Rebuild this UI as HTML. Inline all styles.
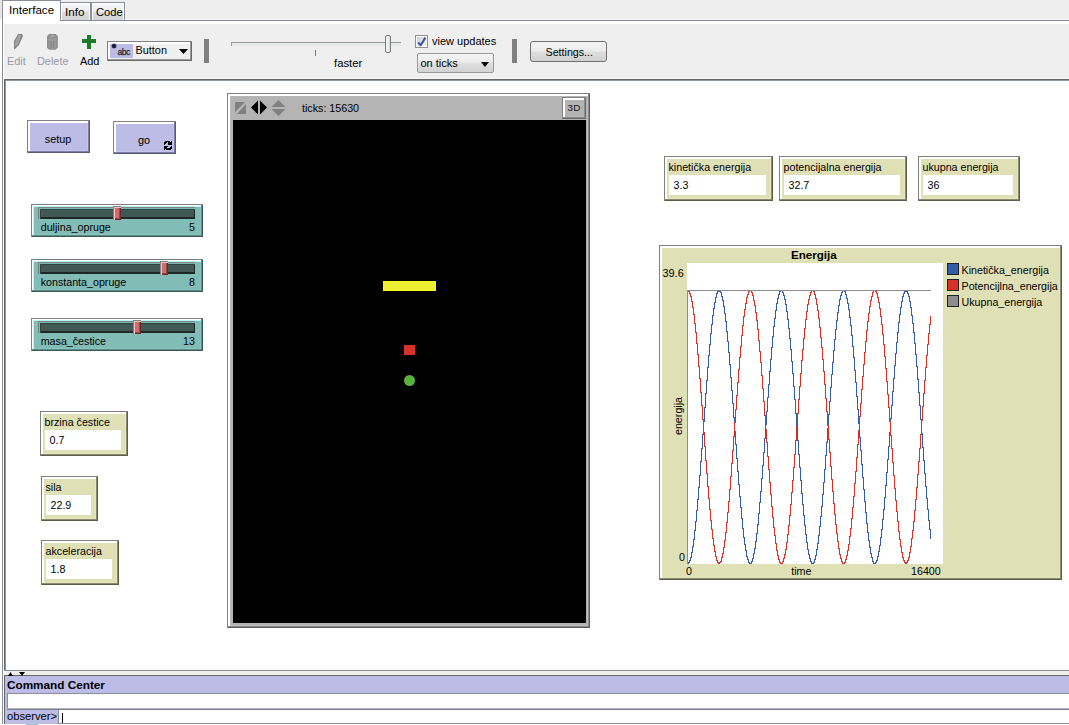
<!DOCTYPE html>
<html><head><meta charset="utf-8"><style>
html,body{margin:0;padding:0;width:1069px;height:725px;overflow:hidden;background:#fff;font-family:"Liberation Sans", sans-serif;}
</style></head><body>
<div style="position:absolute;left:0px;top:0px;width:1069px;height:20px;background:#eeeeee"></div>
<div style="position:absolute;left:0px;top:19px;width:1069px;height:1px;background:#f4f4f4"></div>
<div style="position:absolute;left:0px;top:0px;width:2px;height:19px;background:#e6e6e6"></div>
<div style="position:absolute;left:0px;top:20px;width:1069px;height:1px;background:#898d96"></div>
<div style="position:absolute;left:60px;top:2px;width:31px;height:18px;background:linear-gradient(#f8f8f8,#ececec 50%,#dadada 55%,#d6d6d6);border:1px solid #8a8e98;border-bottom:none;box-sizing:border-box;box-shadow:inset 1px 1px 0 #fff,inset -1px 0 0 #fff"></div>
<div style="position:absolute;left:91px;top:2px;width:34px;height:18px;background:linear-gradient(#f8f8f8,#ececec 50%,#dadada 55%,#d6d6d6);border:1px solid #8a8e98;border-bottom:none;box-sizing:border-box;box-shadow:inset 1px 1px 0 #fff,inset -1px 0 0 #fff"></div>
<div style="position:absolute;left:2px;top:0px;width:59px;height:21px;background:#fff;border:1px solid #8a8e98;border-bottom:none;box-sizing:border-box"></div>
<div style="position:absolute;left:9px;top:2.98px;line-height:14px;font-size:11.6px;font-weight:400;color:#000;white-space:nowrap;">Interface</div>
<div style="position:absolute;left:65px;top:4.98px;line-height:14px;font-size:11.6px;font-weight:400;color:#000;white-space:nowrap;">Info</div>
<div style="position:absolute;left:96px;top:5.12px;line-height:14px;font-size:11.2px;font-weight:400;color:#000;white-space:nowrap;">Code</div>
<div style="position:absolute;left:0px;top:19px;width:2px;height:706px;background:#fff"></div>
<div style="position:absolute;left:2px;top:20px;width:1px;height:705px;background:#8a8e98"></div>
<div style="position:absolute;left:3px;top:21px;width:1066px;height:3px;background:#fff"></div>
<div style="position:absolute;left:4px;top:24px;width:1065px;height:54px;background:#efefef"></div>
<div style="position:absolute;left:4px;top:78px;width:1065px;height:1px;background:#f8f8f8"></div>
<svg style="position:absolute;left:13px;top:33px" width="12" height="18" viewBox="0 0 12 18"><path d="M5 1 H9 L10 3 L6 12 L2 16 H1 V8 Z" fill="#858585"/><path d="M5.6 2 H8.6 L5.2 11 L2.2 13.5 L2 9 Z" fill="#a2a2a2"/></svg>
<div style="position:absolute;left:7px;top:54.22px;line-height:14px;font-size:10.9px;font-weight:400;color:#9a9aa8;white-space:nowrap;">Edit</div>
<svg style="position:absolute;left:46px;top:33px" width="13" height="18" viewBox="0 0 13 18"><path d="M3 1 H9.7 L11.8 3.2 V14.5 L9.7 16.8 H3 L1 14.5 V3.2 Z" fill="#8c8c8c"/><path d="M2.5 4 Q6.4 8 10.5 4 V14 L9.2 15.5 H3.5 L2.5 14 Z" fill="#9a9a9a"/><path d="M5 8v7M7.8 8v7" stroke="#808080" stroke-width="0.9"/><ellipse cx="6.4" cy="3.3" rx="2.5" ry="1.3" fill="#a8a8a8"/></svg>
<div style="position:absolute;left:37px;top:54.22px;line-height:14px;font-size:10.9px;font-weight:400;color:#9a9aa8;white-space:nowrap;">Delete</div>
<div style="position:absolute;left:82px;top:39px;width:14px;height:4px;background:#1c7a2a"></div>
<div style="position:absolute;left:87px;top:35px;width:4px;height:14px;background:#1c7a2a"></div>
<div style="position:absolute;left:80px;top:54.22px;line-height:14px;font-size:10.9px;font-weight:400;color:#000;white-space:nowrap;">Add</div>
<div style="position:absolute;left:107px;top:41px;width:85px;height:20px;background:#efefef;box-shadow:inset 1px 1px 0 #808080, inset -1px -1px 0 #6a6a6a, inset -2px -2px 0 #9a9a9a, inset 2px 2px 0 #fff, inset 3px 3px 0 #fff"></div>
<div style="position:absolute;left:110px;top:44px;width:23px;height:14px;background:#bcbce6"></div>
<div style="position:absolute;left:112px;top:44px;width:4px;height:4px;background:#1a1a40;border-radius:2px;box-shadow:0 0 0 0.5px #555"></div>
<div style="position:absolute;left:117.5px;top:45.02px;line-height:14px;font-size:8.6px;font-weight:400;color:#2a2a2a;white-space:nowrap;letter-spacing:-0.5px;-webkit-text-stroke:0.25px #2a2a2a">abc</div>
<div style="position:absolute;left:135.5px;top:43.22px;line-height:14px;font-size:10.9px;font-weight:400;color:#000;white-space:nowrap;">Button</div>
<svg style="position:absolute;left:179px;top:49px" width="9" height="5"><path d="M0 0H9L4.5 5Z" fill="#000"/></svg>
<div style="position:absolute;left:204px;top:39px;width:5px;height:24px;background:#808080"></div>
<div style="position:absolute;left:512px;top:39px;width:5px;height:24px;background:#808080"></div>
<div style="position:absolute;left:231px;top:42px;width:170px;height:4px;background:#e6eae6;border-top:1px solid #9a9a9a;border-left:1px solid #9a9a9a;box-sizing:border-box"></div>
<div style="position:absolute;left:385px;top:35px;width:6px;height:18px;box-sizing:border-box;border:1px solid #7a7a7a;border-radius:2px;background:linear-gradient(90deg,#fafafa,#dedede)"></div>
<div style="position:absolute;left:315px;top:50px;width:1px;height:6px;background:#777"></div>
<div style="position:absolute;left:334px;top:56.08px;line-height:14px;font-size:11.3px;font-weight:400;color:#000;white-space:nowrap;">faster</div>
<div style="position:absolute;left:415px;top:35px;width:13px;height:13px;box-sizing:border-box;border:1px solid #8e8f8f;background:linear-gradient(135deg,#c4c8d0,#e8e8e8 60%,#f6f6f6);box-shadow:inset 0 0 0 1px #fff"></div>
<svg style="position:absolute;left:416px;top:36px" width="11" height="11"><path d="M2.2 6.3 L4.7 9.3 L9.4 1.6" stroke="#3c58a4" stroke-width="2.1" fill="none" stroke-linejoin="round"/></svg>
<div style="position:absolute;left:432px;top:34.19px;line-height:14px;font-size:11px;font-weight:400;color:#000;white-space:nowrap;">view updates</div>
<div style="position:absolute;left:417px;top:53px;width:77px;height:20px;box-sizing:border-box;border:1px solid #9a9a9a;border-radius:2px;background:linear-gradient(#f4f4f4 0%,#ececec 45%,#dedede 55%,#d2d2d2 100%)"></div>
<div style="position:absolute;left:420.5px;top:56.19px;line-height:14px;font-size:11px;font-weight:400;color:#000;white-space:nowrap;">on ticks</div>
<svg style="position:absolute;left:481px;top:62px" width="8" height="5"><path d="M0 0H8L4 5Z" fill="#000"/></svg>
<div style="position:absolute;left:530px;top:41px;width:77px;height:21px;box-sizing:border-box;border:1px solid #707070;border-radius:3px;background:linear-gradient(#f4f4f4 0%,#ececec 45%,#dedede 55%,#cfcfcf 100%)"></div>
<div style="position:absolute;left:545.5px;top:45.29px;line-height:14px;font-size:10.7px;font-weight:400;color:#000;white-space:nowrap;">Settings...</div>
<div style="position:absolute;left:4px;top:79px;width:1065px;height:1px;background:#646464"></div>
<div style="position:absolute;left:4px;top:80px;width:1065px;height:1px;background:#9096a0"></div>
<div style="position:absolute;left:4px;top:79px;width:1px;height:592px;background:#646464"></div>
<div style="position:absolute;left:5px;top:80px;width:1px;height:591px;background:#9096a0"></div>
<div style="position:absolute;left:6px;top:81px;width:1063px;height:589px;background:#fff"></div>
<div style="position:absolute;left:4px;top:670px;width:1065px;height:1px;background:#8a8e98"></div>
<div style="position:absolute;left:4px;top:671px;width:1065px;height:4px;background:#efefef"></div>
<div style="position:absolute;left:27px;top:120px;width:63px;height:33px;background:#bcbce6;box-shadow:inset 1px 1px 0 #808080, inset -1px -1px 0 #5a5a74, inset -2px -2px 0 #7e7ea4, inset 2px 2px 0 #fff, inset 3px 3px 0 #fff, inset -3px -3px 0 #c4c4ee"></div>
<div style="position:absolute;left:44.7px;top:132.22px;line-height:14px;font-size:10.9px;font-weight:400;color:#000;white-space:nowrap;">setup</div>
<div style="position:absolute;left:113px;top:121px;width:63px;height:33px;background:#bcbce6;box-shadow:inset 1px 1px 0 #808080, inset -1px -1px 0 #5a5a74, inset -2px -2px 0 #7e7ea4, inset 2px 2px 0 #fff, inset 3px 3px 0 #fff, inset -3px -3px 0 #c4c4ee"></div>
<div style="position:absolute;left:138px;top:133.22px;line-height:14px;font-size:10.9px;font-weight:400;color:#000;white-space:nowrap;">go</div>
<svg style="position:absolute;left:164px;top:141px" width="8" height="9" shape-rendering="crispEdges" fill="#000"><rect x="1" y="0" width="1" height="1"/><rect x="2" y="0" width="1" height="1"/><rect x="3" y="0" width="1" height="1"/><rect x="4" y="0" width="1" height="1"/><rect x="5" y="0" width="1" height="1"/><rect x="7" y="0" width="1" height="1"/><rect x="0" y="1" width="1" height="1"/><rect x="1" y="1" width="1" height="1"/><rect x="2" y="1" width="1" height="1"/><rect x="4" y="1" width="1" height="1"/><rect x="5" y="1" width="1" height="1"/><rect x="6" y="1" width="1" height="1"/><rect x="7" y="1" width="1" height="1"/><rect x="0" y="2" width="1" height="1"/><rect x="1" y="2" width="1" height="1"/><rect x="4" y="2" width="1" height="1"/><rect x="5" y="2" width="1" height="1"/><rect x="6" y="2" width="1" height="1"/><rect x="7" y="2" width="1" height="1"/><rect x="0" y="3" width="1" height="1"/><rect x="4" y="3" width="1" height="1"/><rect x="5" y="3" width="1" height="1"/><rect x="6" y="3" width="1" height="1"/><rect x="7" y="3" width="1" height="1"/><rect x="0" y="5" width="1" height="1"/><rect x="1" y="5" width="1" height="1"/><rect x="2" y="5" width="1" height="1"/><rect x="3" y="5" width="1" height="1"/><rect x="7" y="5" width="1" height="1"/><rect x="0" y="6" width="1" height="1"/><rect x="1" y="6" width="1" height="1"/><rect x="2" y="6" width="1" height="1"/><rect x="6" y="6" width="1" height="1"/><rect x="7" y="6" width="1" height="1"/><rect x="0" y="7" width="1" height="1"/><rect x="1" y="7" width="1" height="1"/><rect x="2" y="7" width="1" height="1"/><rect x="3" y="7" width="1" height="1"/><rect x="4" y="7" width="1" height="1"/><rect x="5" y="7" width="1" height="1"/><rect x="6" y="7" width="1" height="1"/><rect x="7" y="7" width="1" height="1"/><rect x="0" y="8" width="1" height="1"/><rect x="2" y="8" width="1" height="1"/><rect x="3" y="8" width="1" height="1"/><rect x="4" y="8" width="1" height="1"/><rect x="5" y="8" width="1" height="1"/><rect x="6" y="8" width="1" height="1"/></svg>
<div style="position:absolute;left:31px;top:204px;width:172px;height:33px;background:#82bcb7;box-shadow:inset 1px 1px 0 #808080, inset -1px -1px 0 #3c5a56, inset -2px -2px 0 #5e8a85, inset 2px 2px 0 #fff, inset 3px 3px 0 #b0f8f8, inset -3px -3px 0 #8ac4bf"></div>
<div style="position:absolute;left:38px;top:207px;width:157px;height:12px;background:#415955;box-shadow:inset 1px 1px 0 #808080, inset 2px 2px 0 #7cb8b2, inset 3px 3px 0 #2e4440, inset -1px -2px 0 #1c2826"></div>
<div style="position:absolute;left:113px;top:206px;width:8px;height:14px;background:linear-gradient(90deg,#d06a6a,#cc7070 60%,#b05858);box-shadow:inset 1px 1px 0 #808080, inset 2px 2px 0 #ffc0c0, inset -1px -1px 0 #6a2828, inset -2px -2px 0 #944848"></div>
<div style="position:absolute;left:40.7px;top:220.29px;line-height:14px;font-size:10.7px;font-weight:400;color:#000;white-space:nowrap;">duljina_opruge</div>
<div style="position:absolute;right:874px;top:220.29px;line-height:14px;font-size:10.7px;font-weight:400;color:#000;white-space:nowrap;">5</div>
<div style="position:absolute;left:31px;top:259px;width:172px;height:33px;background:#82bcb7;box-shadow:inset 1px 1px 0 #808080, inset -1px -1px 0 #3c5a56, inset -2px -2px 0 #5e8a85, inset 2px 2px 0 #fff, inset 3px 3px 0 #b0f8f8, inset -3px -3px 0 #8ac4bf"></div>
<div style="position:absolute;left:38px;top:262px;width:157px;height:12px;background:#415955;box-shadow:inset 1px 1px 0 #808080, inset 2px 2px 0 #7cb8b2, inset 3px 3px 0 #2e4440, inset -1px -2px 0 #1c2826"></div>
<div style="position:absolute;left:160px;top:261px;width:8px;height:14px;background:linear-gradient(90deg,#d06a6a,#cc7070 60%,#b05858);box-shadow:inset 1px 1px 0 #808080, inset 2px 2px 0 #ffc0c0, inset -1px -1px 0 #6a2828, inset -2px -2px 0 #944848"></div>
<div style="position:absolute;left:40.7px;top:275.29px;line-height:14px;font-size:10.7px;font-weight:400;color:#000;white-space:nowrap;">konstanta_opruge</div>
<div style="position:absolute;right:874px;top:275.29px;line-height:14px;font-size:10.7px;font-weight:400;color:#000;white-space:nowrap;">8</div>
<div style="position:absolute;left:31px;top:318px;width:172px;height:33px;background:#82bcb7;box-shadow:inset 1px 1px 0 #808080, inset -1px -1px 0 #3c5a56, inset -2px -2px 0 #5e8a85, inset 2px 2px 0 #fff, inset 3px 3px 0 #b0f8f8, inset -3px -3px 0 #8ac4bf"></div>
<div style="position:absolute;left:38px;top:321px;width:157px;height:12px;background:#415955;box-shadow:inset 1px 1px 0 #808080, inset 2px 2px 0 #7cb8b2, inset 3px 3px 0 #2e4440, inset -1px -2px 0 #1c2826"></div>
<div style="position:absolute;left:133px;top:320px;width:8px;height:14px;background:linear-gradient(90deg,#d06a6a,#cc7070 60%,#b05858);box-shadow:inset 1px 1px 0 #808080, inset 2px 2px 0 #ffc0c0, inset -1px -1px 0 #6a2828, inset -2px -2px 0 #944848"></div>
<div style="position:absolute;left:40.7px;top:334.29px;line-height:14px;font-size:10.7px;font-weight:400;color:#000;white-space:nowrap;">masa_čestice</div>
<div style="position:absolute;right:874px;top:334.29px;line-height:14px;font-size:10.7px;font-weight:400;color:#000;white-space:nowrap;">13</div>
<div style="position:absolute;left:40px;top:411px;width:88px;height:45px;background:#e0e0b6;box-shadow:inset 1px 1px 0 #808080, inset -1px -1px 0 #5e5e48, inset -2px -2px 0 #8a8a70, inset 2px 2px 0 #fff, inset 3px 3px 0 #fff, inset -3px -3px 0 #e6e6c0"></div>
<div style="position:absolute;left:44.5px;top:415.29px;line-height:14px;font-size:10.7px;font-weight:400;color:#000;white-space:nowrap;">brzina čestice</div>
<div style="position:absolute;left:45px;top:430px;width:76px;height:20px;background:#fff"></div>
<div style="position:absolute;left:49.5px;top:433.29px;line-height:14px;font-size:10.7px;font-weight:400;color:#000;white-space:nowrap;">0.7</div>
<div style="position:absolute;left:41px;top:476px;width:57px;height:45px;background:#e0e0b6;box-shadow:inset 1px 1px 0 #808080, inset -1px -1px 0 #5e5e48, inset -2px -2px 0 #8a8a70, inset 2px 2px 0 #fff, inset 3px 3px 0 #fff, inset -3px -3px 0 #e6e6c0"></div>
<div style="position:absolute;left:45.5px;top:480.29px;line-height:14px;font-size:10.7px;font-weight:400;color:#000;white-space:nowrap;">sila</div>
<div style="position:absolute;left:46px;top:495px;width:45px;height:20px;background:#fff"></div>
<div style="position:absolute;left:50.5px;top:498.29px;line-height:14px;font-size:10.7px;font-weight:400;color:#000;white-space:nowrap;">22.9</div>
<div style="position:absolute;left:41px;top:540px;width:78px;height:45px;background:#e0e0b6;box-shadow:inset 1px 1px 0 #808080, inset -1px -1px 0 #5e5e48, inset -2px -2px 0 #8a8a70, inset 2px 2px 0 #fff, inset 3px 3px 0 #fff, inset -3px -3px 0 #e6e6c0"></div>
<div style="position:absolute;left:45.5px;top:544.29px;line-height:14px;font-size:10.7px;font-weight:400;color:#000;white-space:nowrap;">akceleracija</div>
<div style="position:absolute;left:46px;top:559px;width:66px;height:20px;background:#fff"></div>
<div style="position:absolute;left:50.5px;top:562.29px;line-height:14px;font-size:10.7px;font-weight:400;color:#000;white-space:nowrap;">1.8</div>
<div style="position:absolute;left:664px;top:156px;width:109px;height:45px;background:#e0e0b6;box-shadow:inset 1px 1px 0 #808080, inset -1px -1px 0 #5e5e48, inset -2px -2px 0 #8a8a70, inset 2px 2px 0 #fff, inset 3px 3px 0 #fff, inset -3px -3px 0 #e6e6c0"></div>
<div style="position:absolute;left:668.5px;top:160.29px;line-height:14px;font-size:10.7px;font-weight:400;color:#000;white-space:nowrap;">kinetička energija</div>
<div style="position:absolute;left:669px;top:175px;width:97px;height:20px;background:#fff"></div>
<div style="position:absolute;left:673.5px;top:178.29px;line-height:14px;font-size:10.7px;font-weight:400;color:#000;white-space:nowrap;">3.3</div>
<div style="position:absolute;left:779px;top:156px;width:128px;height:45px;background:#e0e0b6;box-shadow:inset 1px 1px 0 #808080, inset -1px -1px 0 #5e5e48, inset -2px -2px 0 #8a8a70, inset 2px 2px 0 #fff, inset 3px 3px 0 #fff, inset -3px -3px 0 #e6e6c0"></div>
<div style="position:absolute;left:783.5px;top:160.29px;line-height:14px;font-size:10.7px;font-weight:400;color:#000;white-space:nowrap;">potencijalna energija</div>
<div style="position:absolute;left:784px;top:175px;width:116px;height:20px;background:#fff"></div>
<div style="position:absolute;left:788.5px;top:178.29px;line-height:14px;font-size:10.7px;font-weight:400;color:#000;white-space:nowrap;">32.7</div>
<div style="position:absolute;left:918px;top:156px;width:102px;height:45px;background:#e0e0b6;box-shadow:inset 1px 1px 0 #808080, inset -1px -1px 0 #5e5e48, inset -2px -2px 0 #8a8a70, inset 2px 2px 0 #fff, inset 3px 3px 0 #fff, inset -3px -3px 0 #e6e6c0"></div>
<div style="position:absolute;left:922.5px;top:160.29px;line-height:14px;font-size:10.7px;font-weight:400;color:#000;white-space:nowrap;">ukupna energija</div>
<div style="position:absolute;left:923px;top:175px;width:90px;height:20px;background:#fff"></div>
<div style="position:absolute;left:927.5px;top:178.29px;line-height:14px;font-size:10.7px;font-weight:400;color:#000;white-space:nowrap;">36</div>
<div style="position:absolute;left:227px;top:93px;width:363px;height:535px;background:#b4b4b4;box-shadow:inset 1px 1px 0 #808080, inset -1px -1px 0 #5a5a5a, inset -2px -2px 0 #8a8a8a, inset 2px 2px 0 #fff, inset 3px 3px 0 #fff, inset -3px -3px 0 #bcbcbc"></div>
<div style="position:absolute;left:233px;top:120px;width:353px;height:503px;background:#000"></div>
<svg style="position:absolute;left:235px;top:102px" width="12" height="13" viewBox="0 0 12 13"><path d="M0 0H10L0 10Z M2 12H11V2Z" fill="#808080"/></svg>
<svg style="position:absolute;left:251px;top:100px" width="17" height="15" viewBox="0 0 17 15"><path d="M7 0.5V14.5L0 7.5Z M9 0.5V14.5L16 7.5Z" fill="#000"/></svg>
<svg style="position:absolute;left:271px;top:99px" width="15" height="18" viewBox="0 0 15 18"><path d="M0.5 8H14.5L7.5 1Z M0.5 10H14.5L7.5 17Z" fill="#808080"/></svg>
<div style="position:absolute;left:302px;top:101.29px;line-height:14px;font-size:10.7px;font-weight:400;color:#000;white-space:nowrap;">ticks: 15630</div>
<div style="position:absolute;left:562px;top:97px;width:24px;height:22px;background:#b4b4b4;box-shadow:inset 1px 1px 0 #808080, inset -1px -1px 0 #6a6a6a, inset -2px -2px 0 #8a8a8a, inset 2px 2px 0 #fff, inset 3px 3px 0 #fff, inset -3px -3px 0 #b4b4b4"></div>
<div style="position:absolute;left:567.5px;top:101.10px;line-height:14px;font-size:9.8px;font-weight:400;color:#111;white-space:nowrap;letter-spacing:0.2px">3D</div>
<div style="position:absolute;left:383px;top:281px;width:53px;height:10px;background:#eded31;box-shadow:inset 0 0 0 1px #f6f620"></div>
<div style="position:absolute;left:404px;top:345px;width:11px;height:10px;background:#d73229"></div>
<div style="position:absolute;left:404px;top:375px;width:11px;height:11px;border-radius:50%;background:#59b03c"></div>
<div style="position:absolute;left:659px;top:245px;width:403px;height:335px;background:#e0e0b6;box-shadow:inset 1px 1px 0 #808080, inset -1px -1px 0 #5e5e48, inset -2px -2px 0 #8a8a70, inset 2px 2px 0 #fff, inset 3px 3px 0 #fff, inset -3px -3px 0 #e6e6c0"></div>
<div style="position:absolute;left:687px;top:263px;width:256px;height:301px;background:#fff"></div>
<div style="position:absolute;left:791px;top:247.98px;line-height:14px;font-size:11.6px;font-weight:700;color:#000;white-space:nowrap;">Energija</div>
<div style="position:absolute;left:662.5px;top:266.22px;line-height:14px;font-size:10.9px;font-weight:400;color:#000;white-space:nowrap;">39.6</div>
<div style="position:absolute;left:679px;top:550.29px;line-height:14px;font-size:10.7px;font-weight:400;color:#000;white-space:nowrap;">0</div>
<div style="position:absolute;left:686px;top:564.29px;line-height:14px;font-size:10.7px;font-weight:400;color:#000;white-space:nowrap;">0</div>
<div style="position:absolute;left:791.2px;top:564.29px;line-height:14px;font-size:10.7px;font-weight:400;color:#000;white-space:nowrap;">time</div>
<div style="position:absolute;left:911px;top:564.29px;line-height:14px;font-size:10.7px;font-weight:400;color:#000;white-space:nowrap;">16400</div>
<div style="position:absolute;left:678px;top:416px;line-height:12px;font-size:10.7px;white-space:nowrap;transform:translate(-50%,-50%) rotate(-90deg)">energija</div>
<svg style="position:absolute;left:687px;top:263px" width="256" height="302" shape-rendering="crispEdges"><path d="M0.5 27.5 V301" stroke="#8d8d8d" stroke-width="1"/><path d="M0.5 300.5H1.5V299.5H2.5V297.5H3.5V294.5H4.5V289.5H5.5V283.5H6.5V276.5H7.5V267.5H8.5V258.5H9.5V247.5H10.5V236.5H11.5V224.5H12.5V212.5H13.5V198.5H14.5V185.5H15.5V171.5H16.5V158.5H17.5V144.5H18.5V130.5H19.5V117.5H20.5V104.5H21.5V92.5H22.5V81.5H23.5V70.5H24.5V61.5H25.5V52.5H26.5V45.5H27.5V39.5H28.5V34.5H29.5V30.5H30.5V28.5H31.5V27.5H32.5V28.5H33.5V29.5H34.5V33.5H35.5V37.5H36.5V43.5H37.5V50.5H38.5V58.5H39.5V68.5H40.5V78.5H41.5V89.5H42.5V101.5H43.5V114.5H44.5V127.5H45.5V140.5H46.5V154.5H47.5V168.5H48.5V181.5H49.5V195.5H50.5V208.5H51.5V221.5H52.5V233.5H53.5V244.5H54.5V255.5H55.5V265.5H56.5V274.5H57.5V281.5H58.5V287.5H59.5V293.5H60.5V296.5H61.5V299.5H62.5V300.5H63.5V300.5H64.5V298.5H65.5V295.5H66.5V290.5H67.5V285.5H68.5V278.5H69.5V270.5H70.5V261.5H71.5V250.5H72.5V239.5H73.5V228.5H74.5V215.5H75.5V202.5H76.5V189.5H77.5V175.5H78.5V161.5H79.5V148.5H80.5V134.5H81.5V121.5H82.5V108.5H83.5V96.5H84.5V84.5H85.5V73.5H86.5V63.5H87.5V55.5H88.5V47.5H89.5V40.5H90.5V35.5H91.5V31.5H92.5V28.5H93.5V27.5H94.5V27.5H95.5V29.5H96.5V32.5H97.5V36.5H98.5V41.5H99.5V48.5H100.5V56.5H101.5V65.5H102.5V75.5H103.5V86.5H104.5V98.5H105.5V110.5H106.5V123.5H107.5V136.5H108.5V150.5H109.5V164.5H110.5V177.5H111.5V191.5H112.5V204.5H113.5V217.5H114.5V230.5H115.5V241.5H116.5V252.5H117.5V262.5H118.5V271.5H119.5V279.5H120.5V286.5H121.5V291.5H122.5V295.5H123.5V298.5H124.5V300.5H125.5V300.5H126.5V299.5H127.5V296.5H128.5V292.5H129.5V286.5H130.5V280.5H131.5V272.5H132.5V263.5H133.5V253.5H134.5V243.5H135.5V231.5H136.5V219.5H137.5V206.5H138.5V192.5H139.5V179.5H140.5V165.5H141.5V151.5H142.5V138.5H143.5V124.5H144.5V111.5H145.5V99.5H146.5V87.5H147.5V76.5H148.5V66.5H149.5V57.5H150.5V49.5H151.5V42.5H152.5V36.5H153.5V32.5H154.5V29.5H155.5V27.5H156.5V27.5H157.5V28.5H158.5V31.5H159.5V35.5H160.5V40.5H161.5V46.5H162.5V54.5H163.5V62.5H164.5V72.5H165.5V83.5H166.5V94.5H167.5V107.5H168.5V119.5H169.5V133.5H170.5V146.5H171.5V160.5H172.5V174.5H173.5V187.5H174.5V201.5H175.5V214.5H176.5V226.5H177.5V238.5H178.5V249.5H179.5V260.5H180.5V269.5H181.5V277.5H182.5V284.5H183.5V290.5H184.5V294.5H185.5V298.5H186.5V300.5H187.5V300.5H188.5V299.5H189.5V297.5H190.5V293.5H191.5V288.5H192.5V282.5H193.5V274.5H194.5V266.5H195.5V256.5H196.5V246.5H197.5V234.5H198.5V222.5H199.5V209.5H200.5V196.5H201.5V183.5H202.5V169.5H203.5V155.5H204.5V142.5H205.5V128.5H206.5V115.5H207.5V102.5H208.5V90.5H209.5V79.5H210.5V69.5H211.5V59.5H212.5V51.5H213.5V44.5H214.5V38.5H215.5V33.5H216.5V30.5H217.5V28.5H218.5V27.5H219.5V28.5H220.5V30.5H221.5V33.5H222.5V38.5H223.5V44.5H224.5V52.5H225.5V60.5H226.5V69.5H227.5V80.5H228.5V91.5H229.5V103.5H230.5V116.5H231.5V129.5H232.5V142.5H233.5V156.5H234.5V170.5H235.5V184.5H236.5V197.5H237.5V210.5H238.5V223.5H239.5V235.5H240.5V246.5H241.5V257.5H242.5V266.5H243.5V275.5" fill="none" stroke="#345da9" stroke-width="1"/><path d="M0.5 27.5H1.5V28.5H2.5V30.5H3.5V33.5H4.5V38.5H5.5V44.5H6.5V51.5H7.5V60.5H8.5V69.5H9.5V80.5H10.5V91.5H11.5V103.5H12.5V115.5H13.5V129.5H14.5V142.5H15.5V156.5H16.5V169.5H17.5V183.5H18.5V197.5H19.5V210.5H20.5V223.5H21.5V235.5H22.5V246.5H23.5V257.5H24.5V266.5H25.5V275.5H26.5V282.5H27.5V288.5H28.5V293.5H29.5V297.5H30.5V299.5H31.5V300.5H32.5V299.5H33.5V298.5H34.5V294.5H35.5V290.5H36.5V284.5H37.5V277.5H38.5V269.5H39.5V259.5H40.5V249.5H41.5V238.5H42.5V226.5H43.5V213.5H44.5V200.5H45.5V187.5H46.5V173.5H47.5V159.5H48.5V146.5H49.5V132.5H50.5V119.5H51.5V106.5H52.5V94.5H53.5V83.5H54.5V72.5H55.5V62.5H56.5V53.5H57.5V46.5H58.5V40.5H59.5V34.5H60.5V31.5H61.5V28.5H62.5V27.5H63.5V27.5H64.5V29.5H65.5V32.5H66.5V37.5H67.5V42.5H68.5V49.5H69.5V57.5H70.5V66.5H71.5V77.5H72.5V88.5H73.5V99.5H74.5V112.5H75.5V125.5H76.5V138.5H77.5V152.5H78.5V166.5H79.5V179.5H80.5V193.5H81.5V206.5H82.5V219.5H83.5V231.5H84.5V243.5H85.5V254.5H86.5V264.5H87.5V272.5H88.5V280.5H89.5V287.5H90.5V292.5H91.5V296.5H92.5V299.5H93.5V300.5H94.5V300.5H95.5V298.5H96.5V295.5H97.5V291.5H98.5V286.5H99.5V279.5H100.5V271.5H101.5V262.5H102.5V252.5H103.5V241.5H104.5V229.5H105.5V217.5H106.5V204.5H107.5V191.5H108.5V177.5H109.5V163.5H110.5V150.5H111.5V136.5H112.5V123.5H113.5V110.5H114.5V97.5H115.5V86.5H116.5V75.5H117.5V65.5H118.5V56.5H119.5V48.5H120.5V41.5H121.5V36.5H122.5V32.5H123.5V29.5H124.5V27.5H125.5V27.5H126.5V28.5H127.5V31.5H128.5V35.5H129.5V41.5H130.5V47.5H131.5V55.5H132.5V64.5H133.5V74.5H134.5V84.5H135.5V96.5H136.5V108.5H137.5V121.5H138.5V135.5H139.5V148.5H140.5V162.5H141.5V176.5H142.5V189.5H143.5V203.5H144.5V216.5H145.5V228.5H146.5V240.5H147.5V251.5H148.5V261.5H149.5V270.5H150.5V278.5H151.5V285.5H152.5V291.5H153.5V295.5H154.5V298.5H155.5V300.5H156.5V300.5H157.5V299.5H158.5V296.5H159.5V292.5H160.5V287.5H161.5V281.5H162.5V273.5H163.5V265.5H164.5V255.5H165.5V244.5H166.5V233.5H167.5V220.5H168.5V208.5H169.5V194.5H170.5V181.5H171.5V167.5H172.5V153.5H173.5V140.5H174.5V126.5H175.5V113.5H176.5V101.5H177.5V89.5H178.5V78.5H179.5V67.5H180.5V58.5H181.5V50.5H182.5V43.5H183.5V37.5H184.5V33.5H185.5V29.5H186.5V27.5H187.5V27.5H188.5V28.5H189.5V30.5H190.5V34.5H191.5V39.5H192.5V45.5H193.5V53.5H194.5V61.5H195.5V71.5H196.5V81.5H197.5V93.5H198.5V105.5H199.5V118.5H200.5V131.5H201.5V144.5H202.5V158.5H203.5V172.5H204.5V185.5H205.5V199.5H206.5V212.5H207.5V225.5H208.5V237.5H209.5V248.5H210.5V258.5H211.5V268.5H212.5V276.5H213.5V283.5H214.5V289.5H215.5V294.5H216.5V297.5H217.5V299.5H218.5V300.5H219.5V299.5H220.5V297.5H221.5V294.5H222.5V289.5H223.5V283.5H224.5V275.5H225.5V267.5H226.5V258.5H227.5V247.5H228.5V236.5H229.5V224.5H230.5V211.5H231.5V198.5H232.5V185.5H233.5V171.5H234.5V157.5H235.5V143.5H236.5V130.5H237.5V117.5H238.5V104.5H239.5V92.5H240.5V81.5H241.5V70.5H242.5V61.5H243.5V52.5" fill="none" stroke="#d73229" stroke-width="1"/><path d="M0 27.5 H244" stroke="#8d8d8d" stroke-width="1"/></svg>
<div style="position:absolute;left:947px;top:263px;width:12px;height:12px;background:#345da9;border:1px solid #222;box-sizing:border-box"></div>
<div style="position:absolute;left:961.5px;top:263.29px;line-height:14px;font-size:10.7px;font-weight:400;color:#000;white-space:nowrap;">Kinetička_energija</div>
<div style="position:absolute;left:947px;top:279px;width:12px;height:12px;background:#d73229;border:1px solid #222;box-sizing:border-box"></div>
<div style="position:absolute;left:961.5px;top:279.29px;line-height:14px;font-size:10.7px;font-weight:400;color:#000;white-space:nowrap;">Potencijlna_energija</div>
<div style="position:absolute;left:947px;top:295px;width:12px;height:12px;background:#8d8d8d;border:1px solid #222;box-sizing:border-box"></div>
<div style="position:absolute;left:961.5px;top:295.29px;line-height:14px;font-size:10.7px;font-weight:400;color:#000;white-space:nowrap;">Ukupna_energija</div>
<div style="position:absolute;left:4px;top:675px;width:1065px;height:1px;background:#646464"></div>
<div style="position:absolute;left:4px;top:675px;width:1px;height:49px;background:#646464"></div>
<div style="position:absolute;left:5px;top:676px;width:1064px;height:48px;background:#bcbce6"></div>
<svg style="position:absolute;left:8px;top:672px" width="18" height="4"><path d="M0 4H5L2.5 0Z M11 0H17L14 4Z" fill="#000"/></svg>
<div style="position:absolute;left:7px;top:677.93px;line-height:14px;font-size:11.75px;font-weight:700;color:#000;white-space:nowrap;">Command Center</div>
<div style="position:absolute;left:7px;top:693px;width:1062px;height:16px;background:#fff;border-top:1px solid #8a8e98;border-left:1px solid #8a8e98;box-sizing:border-box"></div>
<div style="position:absolute;left:7px;top:708px;width:1062px;height:1px;background:#b0b4bc"></div>
<div style="position:absolute;left:7px;top:709px;width:1062px;height:1px;background:#7a808c"></div>
<div style="position:absolute;left:7px;top:708.62px;line-height:14px;font-size:11.2px;font-weight:400;color:#000;white-space:nowrap;">observer&gt;</div>
<div style="position:absolute;left:58px;top:710px;width:1011px;height:13px;background:#fff;border-left:1px solid #8a8e98;box-sizing:border-box"></div>
<div style="position:absolute;left:62px;top:713px;width:1px;height:10px;background:#000"></div>
<div style="position:absolute;left:58px;top:723px;width:1011px;height:1px;background:#8a8e98"></div>
<div style="position:absolute;left:0px;top:724px;width:1069px;height:1px;background:#fff"></div>
<div style="position:absolute;left:26px;top:723px;width:12px;height:2px;background:#a8c4d4"></div>
</body></html>
